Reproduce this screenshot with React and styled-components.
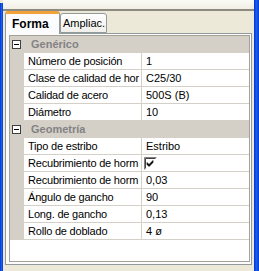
import React from 'react';
import styled, { createGlobalStyle } from 'styled-components';

const Global = createGlobalStyle`
  html, body {
    margin: 0;
    padding: 0;
    background: #ece9d8;
    font-family: "Liberation Sans", Arial, sans-serif;
    font-size: 11px;
    color: #000;
  }
`;

const Window = styled.div`
  display: flex;
  width: 259px;
  height: 271px;
  overflow: hidden;
`;

const BlueEdge = styled.div`
  width: ${p => p.$w}px;
  flex: none;
  margin-top: ${p => p.$top || 0}px;
  background: linear-gradient(to right, #0831d9, #1660ea 50%, #0a3ad6);
`;

const Body = styled.div`
  flex: 1;
  display: flex;
  flex-direction: column;
  padding: 0 2px;
`;

const TopStrip = styled.div`
  height: 9px;
  margin: 0 -2px;
  background: linear-gradient(#fbfbf7, #f1efe4);
  border-bottom: 2px solid #8d8b80;
`;

const TabRow = styled.div`
  display: flex;
  align-items: flex-end;
  height: 22px;
  position: relative;
  z-index: 1;
`;

const Tab = styled.div`
  box-sizing: border-box;
  height: ${p => (p.$active ? 23 : 20)}px;
  width: ${p => p.$w}px;
  padding: ${p => (p.$active ? '0 0 0 6px' : '0 0 0 2px')};
  margin-bottom: ${p => (p.$active ? -1 : 0)}px;
  display: flex;
  align-items: center;
  font-weight: ${p => (p.$active ? 'bold' : 'normal')};
  font-size: ${p => (p.$active ? 12 : 11)}px;
  border: 1px solid #919b9c;
  border-bottom: ${p => (p.$active ? 'none' : '1px solid #919b9c')};
  border-top: ${p => (p.$active ? '3px solid #f2a23a' : '1px solid #919b9c')};
  border-radius: 3px 3px 0 0;
  background: ${p => (p.$active ? '#fcfcfe' : 'linear-gradient(#ffffff, #f0efea)')};
`;

const Panel = styled.div`
  box-sizing: border-box;
  height: 232px;
  border: 1px solid #919b9c;
  background: #fcfcfe;
  padding: 1px 1px 2px 3px;
`;

const Grid = styled.div`
  box-sizing: border-box;
  height: 100%;
  border: 1px solid #a5a197;
  background: #fff;
`;

const CategoryRow = styled.div`
  display: flex;
  align-items: center;
  height: 16px;
  border-bottom: 1px solid #d4d0c8;
  background: #d4d0c8;
  padding-left: 2px;
`;

const CategoryTitle = styled.span`
  margin-left: 10px;
  font-weight: bold;
  color: #848284;
`;

const PropRow = styled.div`
  display: grid;
  grid-template-columns: 14px 117px 1px 1fr;
  height: 16px;
  border-bottom: 1px solid #d4d0c8;
`;

const Margin = styled.div`
  background: #d4d0c8;
  margin-bottom: -1px;
`;

const Cell = styled.div`
  display: flex;
  align-items: center;
  padding-left: ${p => p.$pad}px;
  letter-spacing: ${p => p.$tight ? '-0.2px' : 'normal'};
  white-space: nowrap;
  overflow: hidden;
`;

const Divider = styled.div`
  background: #d4d0c8;
`;

const Check = styled.span`
  display: inline-flex;
  width: 13px;
  height: 13px;
`;

const groups = [
  {
    title: 'Genérico',
    rows: [
      ['Número de posición', '1'],
      ['Clase de calidad de hor', 'C25/30'],
      ['Calidad de acero', '500S (B)'],
      ['Diámetro', '10'],
    ],
  },
  {
    title: 'Geometría',
    rows: [
      ['Tipo de estribo', 'Estribo'],
      ['Recubrimiento de horm', 'check'],
      ['Recubrimiento de horm ', '0,03'],
      ['Ángulo de gancho', '90'],
      ['Long. de gancho', '0,13'],
      ['Rollo de doblado', '4 ø'],
    ],
  },
];

function CollapseBox() {
  return (
    <svg width="9" height="9" viewBox="0 0 9 9">
      <rect x="0.5" y="0.5" width="8" height="8" fill="#fff" stroke="#404040" />
      <path d="M2 4.5h5" stroke="#000" />
    </svg>
  );
}

function CheckBox() {
  return (
    <Check>
      <svg width="13" height="13" viewBox="0 0 13 13">
        <rect x="0" y="0" width="13" height="13" fill="#fff" />
        <path d="M0.5 12.5V0.5h12" stroke="#808080" fill="none" />
        <path d="M1.5 11.5V1.5h10" stroke="#404040" fill="none" />
        <path d="M3 5.5l2 2 4-4v2l-4 4-2-2z" fill="#000" stroke="#000" strokeWidth="0.6" />
      </svg>
    </Check>
  );
}

export default function App() {
  return (
    <Window>
      <Global />
      <BlueEdge $w={3} $top={3} />
      <Body>
        <TopStrip />
        <TabRow>
          <Tab $active $w={55}>Forma</Tab>
          <Tab $w={47}>Ampliac.</Tab>
        </TabRow>
        <Panel>
          <Grid>
            {groups.map(g => (
              <React.Fragment key={g.title}>
                <CategoryRow>
                  <CollapseBox />
                  <CategoryTitle>{g.title}</CategoryTitle>
                </CategoryRow>
                {g.rows.map(([name, value]) => (
                  <PropRow key={name}>
                    <Margin />
                    <Cell $pad={4} $tight>{name.trim()}</Cell>
                    <Divider />
                    <Cell $pad={value === 'check' ? 2 : 4}>
                      {value === 'check' ? <CheckBox /> : value}
                    </Cell>
                  </PropRow>
                ))}
              </React.Fragment>
            ))}
          </Grid>
        </Panel>
      </Body>
      <BlueEdge $w={5} />
    </Window>
  );
}
